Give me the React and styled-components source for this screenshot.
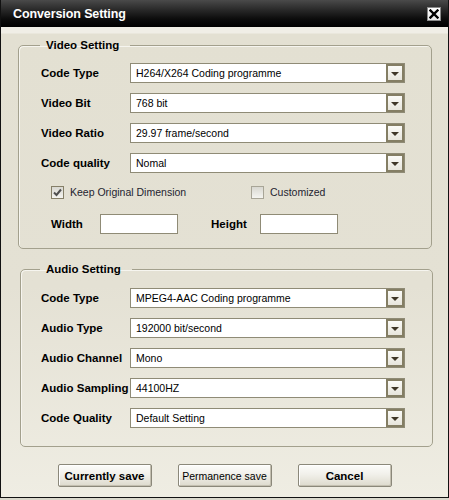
import styled, { createGlobalStyle } from "styled-components";

const GlobalStyle = createGlobalStyle`
  html, body {
    margin: 0;
    padding: 0;
    background: #d9d7cb;
  }
  body {
    font-family: "Liberation Sans", Arial, sans-serif;
  }
`;

const videoRows = [
  { label: "Code Type", value: "H264/X264 Coding programme" },
  { label: "Video Bit", value: "768 bit" },
  { label: "Video Ratio", value: "29.97 frame/second" },
  { label: "Code quality", value: "Nomal" },
];

const audioRows = [
  { label: "Code Type", value: "MPEG4-AAC Coding programme" },
  { label: "Audio Type", value: "192000 bit/second" },
  { label: "Audio Channel", value: "Mono" },
  { label: "Audio Sampling", value: "44100HZ" },
  { label: "Code Quality", value: "Default Setting" },
];

const CloseIcon = () => (
  <svg width="10" height="10" viewBox="0 0 10 10">
    <path d="M1.5 1.5 L8.5 8.5 M8.5 1.5 L1.5 8.5" stroke="#000" strokeWidth="2.4" strokeLinecap="square" />
  </svg>
);

const CheckMark = () => (
  <svg width="11" height="11" viewBox="0 0 11 11">
    <path d="M2 5.5 L4.5 8 L9 2.5" fill="none" stroke="#505050" strokeWidth="2" />
  </svg>
);

const SelectBox = ({ value }) => (
  <Select>
    <SelectValue>{value}</SelectValue>
    <ArrowButton>
      <Triangle />
    </ArrowButton>
  </Select>
);

const FieldRow = ({ label, value }) => (
  <Row>
    <Label>{label}</Label>
    <SelectBox value={value} />
  </Row>
);

export default function App() {
  return (
    <>
      <GlobalStyle />
      <Window>
        <TitleBar>
          <Title>Conversion Setting</Title>
          <CloseButton>
            <CloseIcon />
          </CloseButton>
        </TitleBar>
        <Body>
          <Group $ml={17} $mr={16} $pl={22} $pt={11} $pb={14}>
            <Legend>Video Setting</Legend>
            <RowList>
              {videoRows.map((r) => (
                <FieldRow key={r.label} {...r} />
              ))}
            </RowList>
            <CheckRow>
              <CheckItem>
                <CheckBox $checked>
                  <CheckMark />
                </CheckBox>
                <CheckText>Keep Original Dimension</CheckText>
              </CheckItem>
              <CheckItem>
                <CheckBox />
                <CheckText>Customized</CheckText>
              </CheckItem>
            </CheckRow>
            <SizeRow>
              <SizeField>
                <SizeLabel>Width</SizeLabel>
                <TextInput />
              </SizeField>
              <SizeField>
                <SizeLabel>Height</SizeLabel>
                <TextInput />
              </SizeField>
            </SizeRow>
          </Group>

          <Group $ml={19} $mr={15} $pl={20} $pt={12} $pb={18} $mt={13}>
            <Legend>Audio Setting</Legend>
            <RowList>
              {audioRows.map((r) => (
                <FieldRow key={r.label} {...r} />
              ))}
            </RowList>
          </Group>

          <ButtonBar>
            <Button>Currently save</Button>
            <Button $light>Permanence save</Button>
            <Button>Cancel</Button>
          </ButtonBar>
        </Body>
      </Window>
    </>
  );
}

const Window = styled.div`
  width: 449px;
  height: 498px;
  box-sizing: border-box;
  border: 1px solid #111;
  border-top: none;
  display: flex;
  flex-direction: column;
  overflow: hidden;
`;

const TitleBar = styled.div`
  height: 27px;
  flex: none;
  display: flex;
  align-items: center;
  justify-content: space-between;
  padding: 0 7px 0 12px;
  background: linear-gradient(#4a4a4a 0, #2a2a2a 35%, #0c0c0c 70%, #000 100%);
`;

const Title = styled.div`
  color: #fff;
  font-size: 12.5px;
  font-weight: bold;
  letter-spacing: -0.1px;
`;

const CloseButton = styled.div`
  width: 14px;
  height: 14px;
  box-sizing: border-box;
  background: linear-gradient(#ffffff, #e8e8e8);
  border: 1px solid #8a8a8a;
  display: flex;
  align-items: center;
  justify-content: center;
`;

const Body = styled.div`
  flex: 1;
  padding-top: 11px;
  background: linear-gradient(
    #f0eee6 0,
    #f0eee6 6px,
    #e3e0d2 7px,
    #e4e1d4 55%,
    #efede3 100%
  );
  display: flex;
  flex-direction: column;
`;

const Group = styled.fieldset`
  margin: ${(p) => p.$mt || 0}px ${(p) => p.$mr}px 0 ${(p) => p.$ml}px;
  padding: ${(p) => p.$pt}px 0 ${(p) => p.$pb}px ${(p) => p.$pl}px;
  border: 1px solid #a3a08d;
  border-radius: 5px;
  box-shadow: inset 1px 1px 0 #f6f5ef;
  min-width: 0;
`;

const Legend = styled.legend`
  margin-left: -1px;
  padding: 0 11px 0 6px;
  font-size: 11.5px;
  line-height: 14px;
  font-weight: bold;
  color: #000;
`;

const RowList = styled.div`
  display: flex;
  flex-direction: column;
  gap: 10px;
`;

const Row = styled.div`
  display: grid;
  grid-template-columns: 89px 275px;
  align-items: center;
  height: 20px;
`;

const Label = styled.div`
  font-size: 11.5px;
  font-weight: bold;
  color: #000;
  white-space: nowrap;
`;

const Select = styled.div`
  height: 20px;
  box-sizing: border-box;
  border: 1px solid #8f8b76;
  background: #fff;
  display: flex;
  align-items: center;
`;

const SelectValue = styled.div`
  flex: 1;
  padding-left: 5px;
  font-size: 10.5px;
  color: #000;
  white-space: nowrap;
  overflow: hidden;
`;

const ArrowButton = styled.div`
  width: 18px;
  height: 18px;
  box-sizing: border-box;
  border: 2px solid #847e64;
  background: linear-gradient(#fbfbf8, #e7e5dc);
  display: flex;
  align-items: center;
  justify-content: center;
`;

const Triangle = styled.div`
  width: 0;
  height: 0;
  border-left: 4px solid transparent;
  border-right: 4px solid transparent;
  border-top: 4px solid #3e3627;
  margin-top: 1px;
`;

const CheckRow = styled.div`
  display: grid;
  grid-template-columns: 200px auto;
  margin-top: 12px;
  padding-left: 10px;
  height: 14px;
  align-items: center;
`;

const CheckItem = styled.div`
  display: flex;
  align-items: center;
  gap: 6px;
`;

const CheckBox = styled.div`
  width: 13px;
  height: 13px;
  box-sizing: border-box;
  border: 1px solid ${(p) => (p.$checked ? "#857f68" : "#a8a597")};
  background: linear-gradient(#d9d8d1, #f4f4f0);
  display: flex;
  align-items: center;
  justify-content: center;
`;

const CheckText = styled.span`
  font-size: 10.5px;
  color: #1e2430;
`;

const SizeRow = styled.div`
  display: flex;
  gap: 33px;
  margin-top: 15px;
  padding-left: 10px;
`;

const SizeField = styled.div`
  display: grid;
  grid-template-columns: 49px 78px;
  align-items: center;
`;

const SizeLabel = styled.div`
  font-size: 11.5px;
  font-weight: bold;
  color: #000;
`;

const TextInput = styled.div`
  height: 20px;
  box-sizing: border-box;
  border: 1px solid #8f8b76;
  background: #fff;
`;

const ButtonBar = styled.div`
  display: flex;
  justify-content: center;
  gap: 26px;
  margin-top: 17px;
`;

const Button = styled.div`
  width: 94px;
  height: 23px;
  box-sizing: border-box;
  border: 1px solid #8b887a;
  border-radius: 2px;
  background: linear-gradient(#fcfcfa 0, #f1f0ea 45%, #dddacd 100%);
  box-shadow: inset -1px -1px 0 #c3bfb0, inset 1px 1px 0 #ffffff;
  display: flex;
  align-items: center;
  justify-content: center;
  font-size: ${(p) => (p.$light ? "10.5px" : "11.5px")};
  font-weight: ${(p) => (p.$light ? "normal" : "bold")};
  color: #000;
  white-space: nowrap;
`;
